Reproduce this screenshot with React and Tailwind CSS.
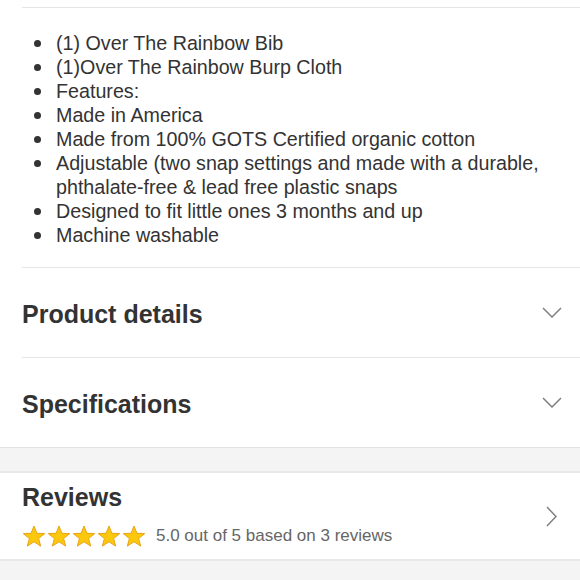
import React from 'react'

const FEATURES = [
  '(1) Over The Rainbow Bib',
  '(1)Over The Rainbow Burp Cloth',
  'Features:',
  'Made in America',
  'Made from 100% GOTS Certified organic cotton',
  'Adjustable (two snap settings and made with a durable, phthalate-free & lead free plastic snaps',
  'Designed to fit little ones 3 months and up',
  'Machine washable',
]

function ChevronDown() {
  return (
    <svg width="20" height="11" viewBox="0 0 20 11" fill="none" stroke="#808080" strokeWidth="1.5">
      <path d="M1 1l9 9 9-9" />
    </svg>
  )
}

function ChevronRight() {
  return (
    <svg width="11" height="21" viewBox="0 0 11 21" fill="none" stroke="#808080" strokeWidth="1.5">
      <path d="M1 1l9 9.5-9 9.5" />
    </svg>
  )
}

function Star() {
  return (
    <svg width="24" height="23" viewBox="0 0 24 23">
      <polygon
        points="12,1 14.9,8.3 22.7,8.6 16.6,13.5 18.7,21.1 12,16.8 5.3,21.1 7.4,13.5 1.3,8.6 9.1,8.3"
        fill="#fcc80c"
        stroke="#e8a317"
        strokeWidth="1"
        strokeLinejoin="round"
      />
    </svg>
  )
}

function AccordionRow({ title }) {
  return (
    <div className="ml-[22px] border-t border-[#e6e6e6] h-[90px] flex items-center justify-between pr-[18px]">
      <h2 className="text-[25px] font-bold text-[#333] leading-[30px] mt-[2px]">{title}</h2>
      <ChevronDown />
    </div>
  )
}

export default function App() {
  return (
    <div className="w-[580px] h-[580px] overflow-hidden bg-[#f4f4f4]" style={{ fontFamily: '"Liberation Sans", Arial, sans-serif' }}>
      <div className="bg-white pt-[7px]">
        <div className="ml-[22px] border-t border-[#e6e6e6] pt-[23px] pb-[20px]">
          <ul className="text-[19.7px] leading-[24px] text-[#333]">
            {FEATURES.map((f) => (
              <li key={f} className="flex">
                <span className="w-[34px] shrink-0 flex justify-start pl-[12px] pt-[9px]">
                  <span className="w-[7px] h-[7px] rounded-full bg-[#333]" />
                </span>
                <span className="pr-[20px]">{f}</span>
              </li>
            ))}
          </ul>
        </div>
        <AccordionRow title="Product details" />
        <AccordionRow title="Specifications" />
      </div>
      <div className="border-t border-[#e2e2e2] h-[24px] bg-[#f4f4f4]" />
      <div className="bg-white border-t-2 border-b-2 border-[#e8e8e8] flex items-center justify-between pr-[23px]">
        <div className="pl-[22px] pt-[9px] pb-[11px]">
          <h2 className="text-[25px] font-bold text-[#333] leading-[30px]">Reviews</h2>
          <div className="flex items-center mt-[12px]">
            <div className="flex gap-[1px]">
              <Star />
              <Star />
              <Star />
              <Star />
              <Star />
            </div>
            <span className="ml-[10px] text-[17px] text-[#666] leading-[24px]">5.0 out of 5 based on 3 reviews</span>
          </div>
        </div>
        <ChevronRight />
      </div>
    </div>
  )
}
